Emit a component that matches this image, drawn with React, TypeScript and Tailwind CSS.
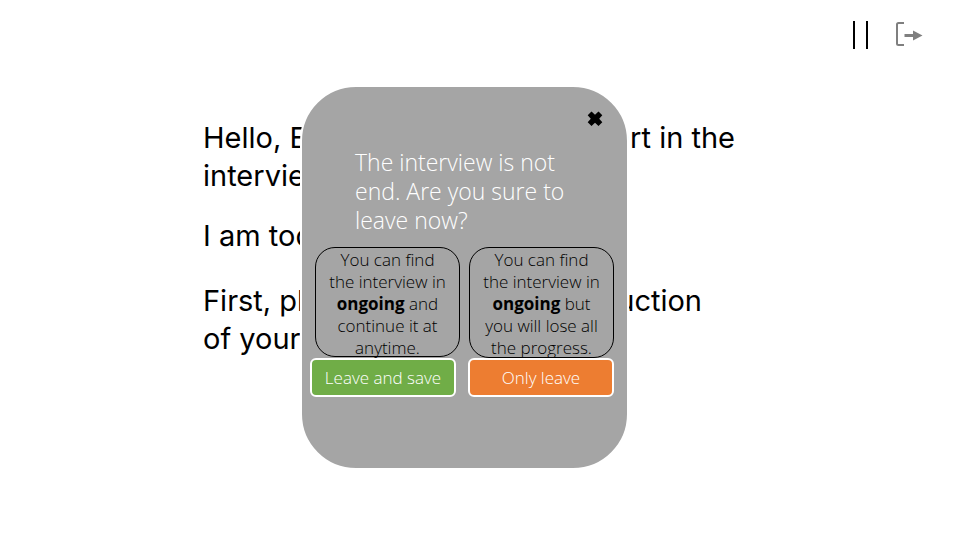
import type { ReactNode } from "react";

function ExitIcon() {
  return (
    <svg width="28" height="26" viewBox="0 0 28 26" fill="none" aria-hidden="true">
      <path d="M9 2H3.500Q2 2 2 3.500V22.500Q2 24 3.500 24H9" stroke="#7f7f7f" strokeWidth="2" />
      <path d="M9.500 14.500H20" stroke="#7f7f7f" strokeWidth="3" />
      <path d="M18 9.500L27.500 14.500L18 19.500Z" fill="#7f7f7f" />
    </svg>
  );
}

function CloseIcon() {
  return (
    <svg width="16" height="16" viewBox="0 0 16 16" aria-hidden="true">
      <path
        d="M4.500 .5L8 3.700L11.500 .5L15.300 4.300L12.200 7.700L15.300 11.200L11.500 15L8 11.800L4.500 15L.7 11.200L3.800 7.700L.7 4.300Z"
        fill="#000"
      />
    </svg>
  );
}

function Line({ start, end }: { start: string; end?: string }) {
  return (
    <span className="flex justify-between">
      <span>{start}</span>
      {end && <span>{end}</span>}
    </span>
  );
}

type ChoiceProps = {
  children: ReactNode;
  label: string;
  color: string;
  noteStyle: string;
};

function Choice({ children, label, color, noteStyle }: ChoiceProps) {
  return (
    <div className="flex w-[146px] flex-col">
      <p
        className={`flex w-[145px] items-center justify-center rounded-[20px] border border-black pt-[3px] text-center text-[17px] leading-[22px] whitespace-nowrap text-black ${noteStyle}`}
      >
        <span>{children}</span>
      </p>
      <button
        type="button"
        className={`h-[39px] w-[146px] rounded-md border-2 border-white pt-px text-[17px] whitespace-nowrap text-white ${color}`}
      >
        {label}
      </button>
    </div>
  );
}

export default function App() {
  return (
    <div className="relative min-h-screen bg-white font-['Inter',sans-serif] text-black">
      <header className="flex items-start justify-end gap-[27px] pt-[21px] pr-[37px]">
        <button type="button" aria-label="Pause" className="flex h-7 gap-[11px]">
          <span className="h-7 w-[2px] bg-black" />
          <span className="h-7 w-[2px] bg-black" />
        </button>
        <button type="button" aria-label="Leave interview">
          <ExitIcon />
        </button>
      </header>

      <main className="ml-[203px] w-[532px] pt-[70px] text-[29px] leading-[38px]">
        <p>
          <Line start="Hello, Emma." end="part in the" />
          <Line start="interview." />
        </p>
        <p className="mt-[22px]">
          <Line start="I am today" />
        </p>
        <p className="mt-[27px] mr-[33px]">
          <Line start="First, please" end="introduction" />
          <Line start="of yourself" />
        </p>
      </main>

      <div className="absolute inset-0 flex items-start justify-center pt-[85px] pr-[31px] font-['Open_Sans',sans-serif] font-light">
        <section
          role="dialog"
          aria-labelledby="leave-title"
          className="w-[329px] rounded-[56px] border-2 border-white bg-[#a5a5a5] px-2 pt-6 pb-[71px]"
        >
          <div className="flex justify-end pr-4">
            <button type="button" aria-label="Close">
              <CloseIcon />
            </button>
          </div>
          <h1
            id="leave-title"
            className="mx-[45px] mt-[21px] mb-3 text-[23px] leading-[29px] whitespace-nowrap text-white"
          >
            The interview is not
            <br />
            end. Are you sure to
            <br />
            leave now?
          </h1>
          <div className="flex gap-3">
            <Choice
              label="Leave and save"
              color="bg-[#70ad47]"
              noteStyle="mb-px ml-[5px] h-[110px]"
            >
              You can find
              <br />
              the interview in
              <br />
              <strong className="font-bold">ongoing</strong> and
              <br />
              continue it at
              <br />
              anytime.
            </Choice>
            <Choice
              label="Only leave"
              color="bg-[#ed7d31]"
              noteStyle="ml-px h-[111px]"
            >
              You can find
              <br />
              the interview in
              <br />
              <strong className="font-bold">ongoing</strong> but
              <br />
              you will lose all
              <br />
              the progress.
            </Choice>
          </div>
        </section>
      </div>
    </div>
  );
}
